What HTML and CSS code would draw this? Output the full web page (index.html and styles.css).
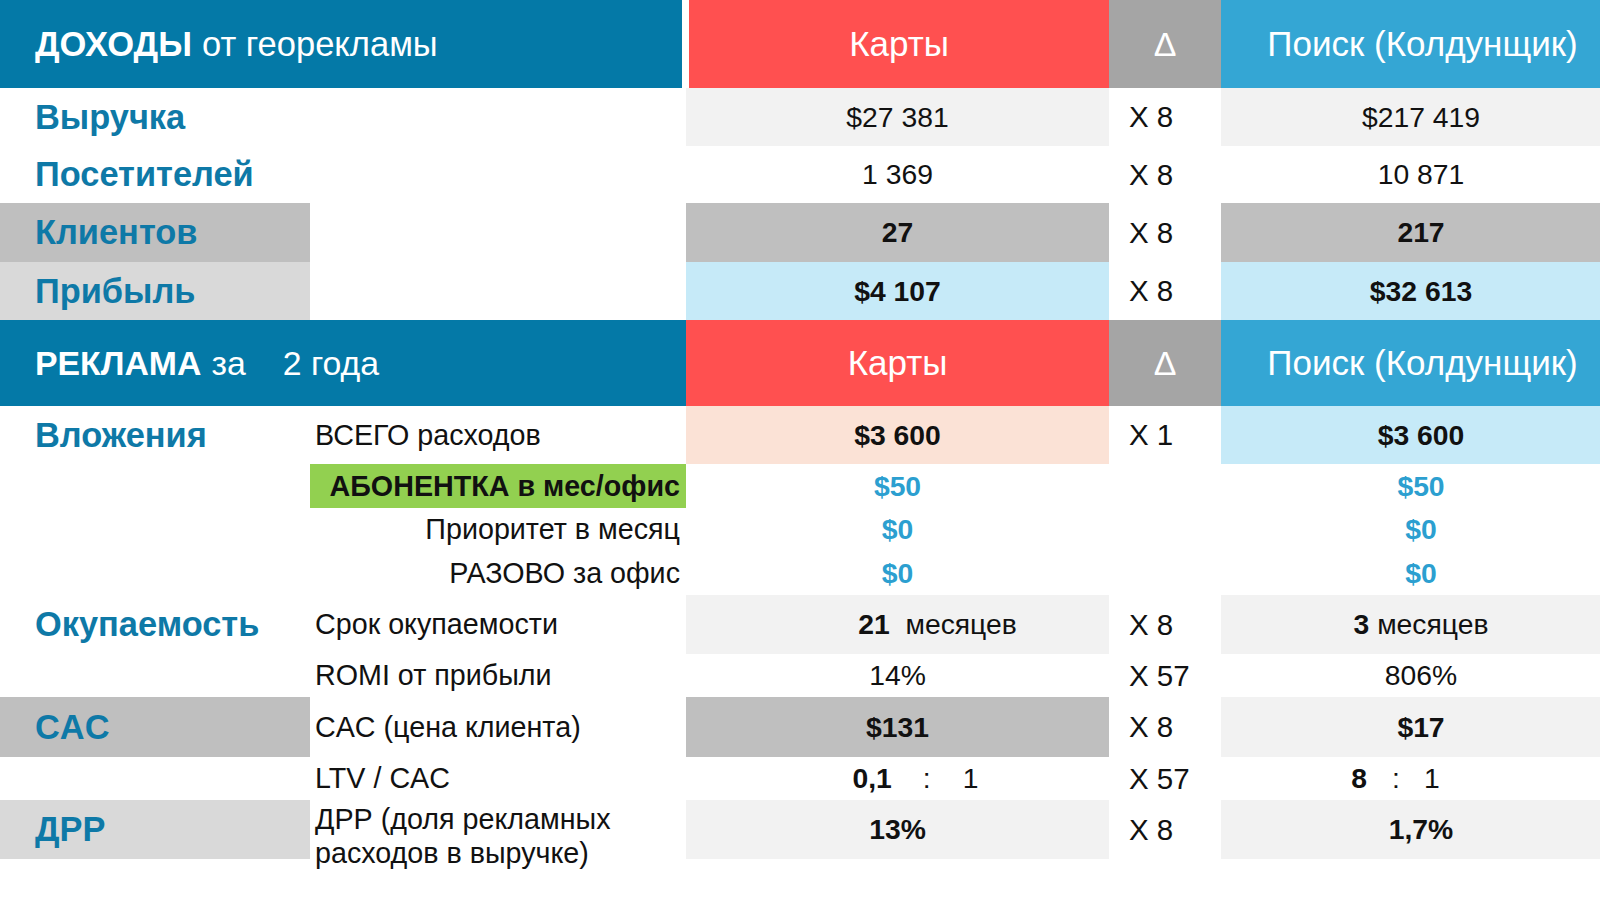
FILE: index.html
```html
<!DOCTYPE html>
<html lang="ru">
<head>
<meta charset="utf-8">
<title>Доходы от георекламы</title>
<link rel="stylesheet" href="styles.css">
</head>
<body>
<div class="sheet">
  <!-- header 1 -->
  <div class="h-title h-title-first"><b>ДОХОДЫ</b> от георекламы</div>
  <div class="h-maps h-maps-first">Карты</div>
  <div class="h-delta">Δ</div>
  <div class="h-search">Поиск (Колдунщик)</div>

  <div class="lbl">Выручка</div>
  <div class="mid"></div>
  <div class="val bg-f2">$27 381</div>
  <div class="delta">X 8</div>
  <div class="val val-s bg-f2">$217 419</div>

  <div class="lbl">Посетителей</div>
  <div class="mid"></div>
  <div class="val">1 369</div>
  <div class="delta">X 8</div>
  <div class="val val-s">10 871</div>

  <div class="lbl bg-bf">Клиентов</div>
  <div class="mid"></div>
  <div class="val bg-bf bold">27</div>
  <div class="delta">X 8</div>
  <div class="val val-s bg-bf bold">217</div>

  <div class="lbl bg-d9">Прибыль</div>
  <div class="mid"></div>
  <div class="val bg-lblue bold">$4 107</div>
  <div class="delta">X 8</div>
  <div class="val val-s bg-lblue bold">$32 613</div>

  <!-- header 2 -->
  <div class="h-title h-title-second"><b>РЕКЛАМА</b> за<span class="years">2 года</span></div>
  <div class="h-maps">Карты</div>
  <div class="h-delta">Δ</div>
  <div class="h-search">Поиск (Колдунщик)</div>

  <div class="lbl">Вложения</div>
  <div class="mid">ВСЕГО расходов</div>
  <div class="val bg-peach bold">$3 600</div>
  <div class="delta">X 1</div>
  <div class="val val-s bg-lblue bold">$3 600</div>

  <div class="lbl"></div>
  <div class="mid mid-right bg-green bold">АБОНЕНТКА в мес/офис</div>
  <div class="val blue bold">$50</div>
  <div class="delta"></div>
  <div class="val val-s blue bold">$50</div>

  <div class="lbl"></div>
  <div class="mid mid-right">Приоритет в месяц</div>
  <div class="val blue bold">$0</div>
  <div class="delta"></div>
  <div class="val val-s blue bold">$0</div>

  <div class="lbl"></div>
  <div class="mid mid-right">РАЗОВО за офис</div>
  <div class="val blue bold">$0</div>
  <div class="delta"></div>
  <div class="val val-s blue bold">$0</div>

  <div class="lbl">Окупаемость</div>
  <div class="mid">Срок окупаемости</div>
  <div class="val val-months bg-f2"><b>21</b>&nbsp; месяцев</div>
  <div class="delta">X 8</div>
  <div class="val val-s bg-f2"><b>3</b>&nbsp;месяцев</div>

  <div class="lbl"></div>
  <div class="mid">ROMI от прибыли</div>
  <div class="val">14%</div>
  <div class="delta">X 57</div>
  <div class="val val-s">806%</div>

  <div class="lbl bg-bf">CAC</div>
  <div class="mid">CAC (цена клиента)</div>
  <div class="val bg-bf bold">$131</div>
  <div class="delta">X 8</div>
  <div class="val val-s bg-f2 bold">$17</div>

  <div class="lbl"></div>
  <div class="mid">LTV / CAC</div>
  <div class="val ratio ratio-maps"><b>0,1</b><span class="colon">:</span><span>1</span></div>
  <div class="delta">X 57</div>
  <div class="val val-s ratio ratio-search"><b>8</b><span class="colon">:</span><span>1</span></div>

  <div class="lbl bg-d9">ДРР</div>
  <div class="mid mid-two">ДРР (доля рекламных<br>расходов в выручке)</div>
  <div class="val bg-f2 bold">13%</div>
  <div class="delta">X 8</div>
  <div class="val val-s bg-f2 bold">1,7%</div>
</div>
</body>
</html>
```

FILE: styles.css
```css
html, body {
  margin: 0;
  padding: 0;
  background: #ffffff;
}

body {
  font-family: "Liberation Sans", Arial, sans-serif;
  color: #000;
  width: 1600px;
  height: 899px;
  overflow: hidden;
}

.sheet {
  display: grid;
  grid-template-columns: 310px 376px 423px 112px 379px;
  grid-template-rows: 88px 58px 57px 59px 58px 86px 58px 44px 43px 44px 59px 43px 60px 43px 59px;
}

/* headers */
.h-title {
  grid-column: span 2;
  background: #0479a7;
  color: #fff;
  font-size: 34.5px;
  display: flex;
  align-items: center;
  padding-left: 35px;
  white-space: nowrap;
}
.h-title-first {
  margin-right: 4px;
}
.h-title-second {
  font-size: 33.8px;
}
.h-title b {
  margin-right: 10px;
}
.years {
  margin-left: 37px;
}

.h-maps {
  background: #ff5050;
  color: #fff;
  font-size: 35px;
  display: flex;
  align-items: center;
  justify-content: center;
}
.h-maps-first {
  margin-left: 3px;
}
.h-delta {
  background: #a5a5a5;
  color: #fff;
  font-size: 34px;
  display: flex;
  align-items: center;
  justify-content: center;
}
.h-search {
  background: #34a6d4;
  color: #fff;
  font-size: 35px;
  display: flex;
  align-items: center;
  justify-content: center;
  padding-left: 24px;
  white-space: nowrap;
}

/* body cells */
.lbl {
  color: #0e79a7;
  font-weight: bold;
  font-size: 34.4px;
  display: flex;
  align-items: center;
  padding-left: 35px;
  white-space: nowrap;
}
.mid {
  font-size: 28.7px;
  display: flex;
  align-items: center;
  padding-left: 5px;
  white-space: nowrap;
  color: #111;
}
.mid-right {
  justify-content: flex-end;
  padding-right: 6px;
  padding-left: 0;
}
.mid-two {
  line-height: 34px;
  padding-top: 2px;
  align-items: flex-start;
}
.val {
  font-size: 28.3px;
  display: flex;
  align-items: center;
  justify-content: center;
  white-space: nowrap;
  color: #111;
}
.val-s {
  padding-left: 21px;
}
.val-months {
  padding-left: 80px;
}
.delta {
  font-size: 29.5px;
  display: flex;
  align-items: center;
  padding-left: 20px;
  color: #111;
}

.ratio .colon {
  margin: 0 32px 0 31px;
}
.ratio-maps {
  padding-left: 36px;
}
.ratio-search .colon {
  margin: 0 24px 0 25px;
}
.ratio-search {
  padding-left: 0;
  padding-right: 30px;
}

.bold { font-weight: bold; }
.blue { color: #2c9fd0; }

.bg-f2 { background: #f2f2f2; }
.bg-bf { background: #bfbfbf; }
.bg-d9 { background: #d9d9d9; }
.bg-lblue { background: #c6eaf8; }
.bg-peach { background: #fbe2d6; }
.bg-green { background: #92d050; }
```
